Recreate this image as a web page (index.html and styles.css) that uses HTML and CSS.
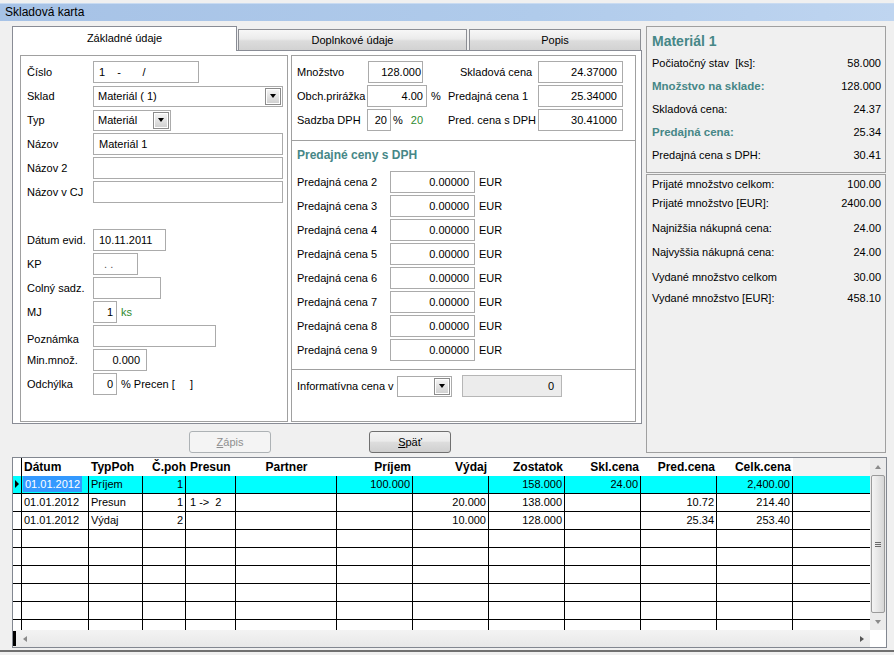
FILE: index.html
```html
<!DOCTYPE html>
<html lang="sk">
<head>
<meta charset="utf-8">
<title>Skladová karta</title>
<link rel="stylesheet" href="styles.css">
</head>
<body>
<div class="titlebar">Skladová karta</div>
<div class="main">
  <div class="leftcol">
    <div class="tabs">
      <div class="tab active">Základné údaje</div>
      <div class="tab t2">Doplnkové údaje</div>
      <div class="tab t3">Popis</div>
    </div>
    <div class="tabpage">
      <div class="box leftbox">
        <div class="frow"><div class="flabel">Číslo</div><div class="field w106">1    -       /</div></div>
        <div class="frow"><div class="flabel">Sklad</div><div class="select w190"><span>Materiál ( 1)</span><span class="ddbtn"></span></div></div>
        <div class="frow"><div class="flabel">Typ</div><div class="select w78"><span>Materiál</span><span class="ddbtn"></span></div></div>
        <div class="frow"><div class="flabel">Názov</div><div class="field w190">Materiál 1</div></div>
        <div class="frow"><div class="flabel">Názov 2</div><div class="field w190"></div></div>
        <div class="frow"><div class="flabel">Názov v CJ</div><div class="field w190"></div></div>
        <div class="frow"></div>
        <div class="frow"><div class="flabel">Dátum evid.</div><div class="field w73">10.11.2011</div></div>
        <div class="frow"><div class="flabel">KP</div><div class="field w45 kp"> . .</div></div>
        <div class="frow"><div class="flabel">Colný sadz.</div><div class="field w68"></div></div>
        <div class="frow"><div class="flabel">MJ</div><div class="field w24 r">1</div><span class="green sfx">ks</span></div>
        <div class="frow low"><div class="flabel">Poznámka</div><div class="field w123"></div></div>
        <div class="frow"><div class="flabel">Min.množ.</div><div class="field w54 r">0.000</div></div>
        <div class="frow"><div class="flabel">Odchýlka</div><div class="field w24 r">0</div><span class="sfx">% Precen [&nbsp;&nbsp;&nbsp;&nbsp;&nbsp;]</span></div>
      </div>
      <div class="box midbox">
        <div class="mtop">
          <div class="mrow">
            <div class="mleft"><div class="mlabel">Množstvo</div><div class="field w55 r tight shift">128.000</div></div>
            <div class="mrlabel indent">Skladová cena</div>
            <div class="field w85 r">24.37000</div>
          </div>
          <div class="mrow">
            <div class="mleft"><div class="mlabel">Obch.prirážka</div><div class="field w60 r pr3">4.00</div><span class="sfx">%</span></div>
            <div class="mrlabel">Predajná cena 1</div>
            <div class="field w85 r">25.34000</div>
          </div>
          <div class="mrow">
            <div class="mleft"><div class="mlabel">Sadzba DPH</div><div class="field w24 r">20</div><span class="pct">%</span><span class="green dph">20</span></div>
            <div class="mrlabel">Pred. cena s DPH</div>
            <div class="field w85 r">30.41000</div>
          </div>
        </div>
        <div class="mmid">
          <div class="mtitle">Predajné ceny s DPH</div>
          <div class="prow"><div class="plabel">Predajná cena 2</div><div class="field w85 r">0.00000</div><span class="eur">EUR</span></div>
          <div class="prow"><div class="plabel">Predajná cena 3</div><div class="field w85 r">0.00000</div><span class="eur">EUR</span></div>
          <div class="prow"><div class="plabel">Predajná cena 4</div><div class="field w85 r">0.00000</div><span class="eur">EUR</span></div>
          <div class="prow"><div class="plabel">Predajná cena 5</div><div class="field w85 r">0.00000</div><span class="eur">EUR</span></div>
          <div class="prow"><div class="plabel">Predajná cena 6</div><div class="field w85 r">0.00000</div><span class="eur">EUR</span></div>
          <div class="prow"><div class="plabel">Predajná cena 7</div><div class="field w85 r">0.00000</div><span class="eur">EUR</span></div>
          <div class="prow"><div class="plabel">Predajná cena 8</div><div class="field w85 r">0.00000</div><span class="eur">EUR</span></div>
          <div class="prow"><div class="plabel">Predajná cena 9</div><div class="field w85 r">0.00000</div><span class="eur">EUR</span></div>
        </div>
        <div class="mbot">
          <div class="prow"><div class="ilabel">Informatívna cena v</div><div class="select w55"><span></span><span class="ddbtn"></span></div><div class="field w100 r grey">0</div></div>
        </div>
      </div>
    </div>
    <div class="buttons">
      <div class="btn disabled"><u>Z</u>ápis</div>
      <div class="btn"><u>S</u>päť</div>
    </div>
  </div>
  <div class="rightpanel">
    <div class="rbox rtop">
      <div class="rtitle">Materiál 1</div>
      <div class="rrow"><span>Počiatočný stav  [ks]:</span><span>58.000</span></div>
      <div class="rrow"><span class="teal">Množstvo na sklade:</span><span>128.000</span></div>
      <div class="rrow"><span>Skladová cena:</span><span>24.37</span></div>
      <div class="rrow"><span class="teal">Predajná cena:</span><span>25.34</span></div>
      <div class="rrow"><span>Predajná cena s DPH:</span><span>30.41</span></div>
    </div>
    <div class="rbox rbottom">
      <div class="brow"><span>Prijaté množstvo celkom:</span><span>100.00</span></div>
      <div class="brow g1"><span>Prijaté množstvo [EUR]:</span><span>2400.00</span></div>
      <div class="brow g7"><span>Najnižšia nákupná cena:</span><span>24.00</span></div>
      <div class="brow g6"><span>Najvyššia nákupná cena:</span><span>24.00</span></div>
      <div class="brow g7"><span>Vydané množstvo celkom</span><span>30.00</span></div>
      <div class="brow g3"><span>Vydané množstvo [EUR]:</span><span>458.10</span></div>
    </div>
  </div>
</div>
<div class="grid">
  <div class="gtop">
    <div class="gtable">
      <div class="grow ghead">
        <div class="c ci"></div>
        <div class="c c1">Dátum</div>
        <div class="c c2">TypPoh</div>
        <div class="c c3 r">Č.poh</div>
        <div class="c c4">Presun</div>
        <div class="c c5 ctr">Partner</div>
        <div class="c cn r">Príjem</div>
        <div class="c cn r">Výdaj</div>
        <div class="c cn r">Zostatok</div>
        <div class="c cn r">Skl.cena</div>
        <div class="c cn r">Pred.cena</div>
        <div class="c cn r">Celk.cena</div>
        <div class="c cf"></div>
      </div>
      <div class="grow sel">
        <div class="c ci"><span class="ptr"></span></div>
        <div class="c c1 first"><span class="hl">01.01.2012</span></div>
        <div class="c c2">Príjem</div>
        <div class="c c3 r">1</div>
        <div class="c c4"></div>
        <div class="c c5"></div>
        <div class="c cn r">100.000</div>
        <div class="c cn r"></div>
        <div class="c cn r">158.000</div>
        <div class="c cn r">24.00</div>
        <div class="c cn r"></div>
        <div class="c cn r">2,400.00</div>
        <div class="c cf"></div>
      </div>
      <div class="grow">
        <div class="c ci"></div>
        <div class="c c1">01.01.2012</div>
        <div class="c c2">Presun</div>
        <div class="c c3 r">1</div>
        <div class="c c4">1 -&gt;  2</div>
        <div class="c c5"></div>
        <div class="c cn r"></div>
        <div class="c cn r">20.000</div>
        <div class="c cn r">138.000</div>
        <div class="c cn r"></div>
        <div class="c cn r">10.72</div>
        <div class="c cn r">214.40</div>
        <div class="c cf"></div>
      </div>
      <div class="grow">
        <div class="c ci"></div>
        <div class="c c1">01.01.2012</div>
        <div class="c c2">Výdaj</div>
        <div class="c c3 r">2</div>
        <div class="c c4"></div>
        <div class="c c5"></div>
        <div class="c cn r"></div>
        <div class="c cn r">10.000</div>
        <div class="c cn r">128.000</div>
        <div class="c cn r"></div>
        <div class="c cn r">25.34</div>
        <div class="c cn r">253.40</div>
        <div class="c cf"></div>
      </div>
      <div class="grow"><div class="c ci"></div><div class="c c1"></div><div class="c c2"></div><div class="c c3"></div><div class="c c4"></div><div class="c c5"></div><div class="c cn"></div><div class="c cn"></div><div class="c cn"></div><div class="c cn"></div><div class="c cn"></div><div class="c cn"></div><div class="c cf"></div></div>
      <div class="grow"><div class="c ci"></div><div class="c c1"></div><div class="c c2"></div><div class="c c3"></div><div class="c c4"></div><div class="c c5"></div><div class="c cn"></div><div class="c cn"></div><div class="c cn"></div><div class="c cn"></div><div class="c cn"></div><div class="c cn"></div><div class="c cf"></div></div>
      <div class="grow"><div class="c ci"></div><div class="c c1"></div><div class="c c2"></div><div class="c c3"></div><div class="c c4"></div><div class="c c5"></div><div class="c cn"></div><div class="c cn"></div><div class="c cn"></div><div class="c cn"></div><div class="c cn"></div><div class="c cn"></div><div class="c cf"></div></div>
      <div class="grow"><div class="c ci"></div><div class="c c1"></div><div class="c c2"></div><div class="c c3"></div><div class="c c4"></div><div class="c c5"></div><div class="c cn"></div><div class="c cn"></div><div class="c cn"></div><div class="c cn"></div><div class="c cn"></div><div class="c cn"></div><div class="c cf"></div></div>
      <div class="grow"><div class="c ci"></div><div class="c c1"></div><div class="c c2"></div><div class="c c3"></div><div class="c c4"></div><div class="c c5"></div><div class="c cn"></div><div class="c cn"></div><div class="c cn"></div><div class="c cn"></div><div class="c cn"></div><div class="c cn"></div><div class="c cf"></div></div>
      <div class="grow"><div class="c ci"></div><div class="c c1"></div><div class="c c2"></div><div class="c c3"></div><div class="c c4"></div><div class="c c5"></div><div class="c cn"></div><div class="c cn"></div><div class="c cn"></div><div class="c cn"></div><div class="c cn"></div><div class="c cn"></div><div class="c cf"></div></div>
    </div>
    <div class="vscroll">
      <div class="arr up"></div>
      <div class="thumb"><span class="grip"></span></div>
      <div class="arr down"></div>
    </div>
  </div>
  <div class="gbot">
    <div class="hscroll">
      <span class="hmark"></span>
      <span class="harr left"></span>
      <span class="hspace"></span>
      <span class="harr right"></span>
    </div>
    <div class="corner"></div>
  </div>
</div>
<div class="footline"></div>
</body>
</html>
```
FILE: styles.css
```css
* { box-sizing: border-box; }

body {
  margin: 0;
  width: 894px;
  height: 655px;
  overflow: hidden;
  background: #f0f0f0;
  font-family: "Liberation Sans", Arial, sans-serif;
  font-size: 11px;
  color: #000;
}

.titlebar {
  margin-top: 3px;
  height: 18px;
  line-height: 17px;
  padding-left: 5px;
  font-size: 12px;
  border-top: 1px solid #c9dbf1;
  background: linear-gradient(to right, #a6c2e6, #b0cbeb 60%, #bfd5f0);
}

.main {
  display: flex;
  gap: 4px;
  padding: 5px 0 0 12px;
}

.leftcol {
  width: 630px;
  display: flex;
  flex-direction: column;
}

.tabs {
  display: flex;
  align-items: flex-end;
  height: 25px;
  margin-bottom: -1px;
}

.tab {
  height: 21px;
  margin-bottom: 1px;
  border: 1px solid #8c8e94;
  border-bottom: none;
  background: linear-gradient(#f7f7f7, #ebebeb 45%, #dcdcdc 55%, #d2d2d2);
  text-align: center;
  line-height: 20px;
}

.tab.active {
  width: 225px;
  height: 25px;
  margin-bottom: 0;
  background: #fff;
  line-height: 22px;
  border-color: #898c95;
  position: relative;
  z-index: 1;
}

.tab.t2 { width: 229px; margin-left: 1px; }
.tab.t3 { width: 172px; margin-left: 2px; }

.tabpage {
  height: 374px;
  border: 1px solid #898c95;
  background: #fff;
  display: flex;
  gap: 3px;
  padding: 4px 5px 0 7px;
}

.box {
  border: 1px solid #a0a0a0;
  height: 367px;
}

.leftbox {
  width: 268px;
  padding: 5px 0 0 6px;
}

.midbox {
  width: 345px;
  display: flex;
  flex-direction: column;
}

.frow {
  display: flex;
  align-items: center;
  height: 22px;
  margin-bottom: 2px;
}

.frow.low .flabel { padding-top: 6px; }

.flabel { width: 66px; flex: none; }

.field {
  flex: none;
  height: 22px;
  border: 1px solid #ababab;
  background: #fff;
  padding: 0 5px;
  line-height: 20px;
  white-space: pre;
  overflow: hidden;
}

.field.r { text-align: right; }
.field.tight { padding-right: 1px; }
.field.pr3 { padding-right: 3px; }
.field.shift { margin-left: 1px; }
.field.kp { color: #555; padding-left: 7px; }
.field.grey { background: #ececec; border-color: #b6b6b6; margin-left: 10px; padding-right: 7px; }

.w24 { width: 24px; padding-right: 3px; }
.w45 { width: 45px; }
.w54 { width: 54px; padding-right: 6px; }
.w55 { width: 55px; }
.w60 { width: 60px; }
.w68 { width: 68px; }
.w73 { width: 73px; }
.w78 { width: 78px; }
.w85 { width: 85px; }
.w100 { width: 100px; }
.w106 { width: 106px; }
.w123 { width: 123px; }
.w190 { width: 190px; }

.select {
  flex: none;
  height: 21px;
  border: 1px solid #ababab;
  background: #fff;
  display: flex;
  align-items: center;
  justify-content: space-between;
  padding: 0 1px 0 4px;
}

.ddbtn {
  width: 16px;
  height: 17px;
  border: 1px solid #8b8b8b;
  background: linear-gradient(#f6f6f6, #e2e2e2 50%, #cfcfcf);
  box-shadow: inset 0 0 0 1px #fff;
  display: flex;
  align-items: center;
  justify-content: center;
}

.ddbtn::after {
  content: "";
  border-left: 3.5px solid transparent;
  border-right: 3.5px solid transparent;
  border-top: 4px solid #000;
}

.sfx { margin-left: 4px; }
.green { color: #2f8a2f; }
.pct { margin-left: 2px; }
.dph { margin-left: 8px; }

/* middle box */
.mtop {
  height: 85px;
  border-bottom: 1px solid #a0a0a0;
  padding: 5px 0 0 5px;
}

.mrow {
  display: grid;
  grid-template-columns: 151px 90px 85px;
  height: 22px;
  margin-bottom: 2px;
  align-items: center;
}

.mleft { display: flex; align-items: center; }
.mlabel { width: 70px; flex: none; }
.mrlabel.indent { padding-left: 12px; }

.mmid {
  height: 229px;
  border-bottom: 1px solid #a0a0a0;
  padding: 4px 0 0 5px;
}

.mtitle {
  color: #468787;
  font-weight: bold;
  font-size: 12px;
  line-height: 20px;
  margin-bottom: 6px;
}

.prow {
  display: flex;
  align-items: center;
  height: 22px;
  margin-bottom: 2px;
}

.plabel { width: 93px; flex: none; }
.eur { margin-left: 4px; }

.mbot { padding: 5px 0 0 5px; }
.ilabel { width: 100px; flex: none; }

/* buttons */
.buttons {
  display: flex;
  gap: 98px;
  padding-left: 177px;
  margin-top: 7px;
}

.btn {
  width: 82px;
  height: 22px;
  border: 1px solid #707070;
  border-radius: 3px;
  background: linear-gradient(#f3f3f3, #ebebeb 45%, #dddddd 52%, #cfcfcf);
  text-align: center;
  line-height: 20px;
}

.btn.disabled {
  border-color: #adb2b5;
  background: #f4f4f4;
  color: #8f8f8f;
}

/* right panel */
.rightpanel {
  width: 240px;
  display: flex;
  flex-direction: column;
  gap: 1px;
}

.rbox {
  border: 1px solid #a0a0a0;
  padding: 0 4px 0 5px;
  font-size: 11px;
}

.rtop { height: 147px; padding-top: 3px; }
.rbottom { height: 279px; }

.rtitle {
  font-size: 14px;
  font-weight: bold;
  color: #468787;
  line-height: 22px;
}

.rrow {
  display: flex;
  justify-content: space-between;
  height: 23px;
  line-height: 23px;
  white-space: pre;
}

.teal { color: #468787; font-weight: bold; font-size: 11.5px; }

.brow {
  display: flex;
  justify-content: space-between;
  height: 18px;
  line-height: 18px;
}

.g1 { margin-top: 1px; }
.g3 { margin-top: 3px; }
.g6 { margin-top: 6px; }
.g7 { margin-top: 7px; }

/* grid */
.grid {
  margin: 4px 0 0 12px;
  width: 875px;
  height: 191px;
  border: 1px solid #828790;
  background: #fff;
  display: flex;
  flex-direction: column;
}

.gtop { display: flex; height: 172px; }
.gtable { width: 857px; overflow: hidden; }

.grow {
  display: flex;
  height: 18px;
  border-bottom: 1px solid #000;
}

.grow.sel { background: #00ffff; }

.c {
  flex: none;
  height: 17px;
  border-right: 1px solid #000;
  padding: 0 2px;
  line-height: 17px;
  white-space: pre;
  overflow: hidden;
}

.c.r { text-align: right; }
.c.ctr { text-align: center; }
.ci { width: 9px; padding: 0; }
.c1 { width: 67px; }
.c1.first { padding-left: 1px; }
.c2 { width: 54px; }
.c3 { width: 43px; }
.c4 { width: 50px; padding-left: 4px; }
.c5 { width: 101px; }
.cn { width: 76px; }
.cf { flex: 1; border-right: none; }

.ghead {
  border-bottom: none;
  font-weight: bold;
  font-size: 12px;
}

.ghead .c { border-right: none; height: 18px; line-height: 18px; }
.ghead .ci { border-right: 1px solid #000; }
.ghead .cf { background: #f3f3f3; }
.ghead .c3 { padding-right: 0; }

.hl {
  display: inline-block;
  background: #3399ff;
  color: #fff;
  padding: 0 2px;
  line-height: 16px;
}

.ptr {
  display: block;
  width: 0;
  margin: 4px 0 0 2px;
  border-left: 4px solid #000;
  border-top: 4px solid transparent;
  border-bottom: 4px solid transparent;
}

.vscroll {
  width: 16px;
  display: flex;
  flex-direction: column;
  background: #ebebeb;
}

.arr {
  height: 17px;
  flex: none;
  display: flex;
  align-items: center;
  justify-content: center;
}

.arr.up::after {
  content: "";
  border-left: 3.5px solid transparent;
  border-right: 3.5px solid transparent;
  border-bottom: 4px solid #8a8a8a;
}

.arr.down::after {
  content: "";
  border-left: 3.5px solid transparent;
  border-right: 3.5px solid transparent;
  border-top: 4px solid #8a8a8a;
}

.thumb {
  flex: 1;
  margin: 0 1px;
  border: 1px solid #9a9a9a;
  border-radius: 2px;
  background: linear-gradient(to right, #f4f4f4, #e6e6e6 50%, #d6d6d6);
  display: flex;
  align-items: center;
  justify-content: center;
}

.grip {
  width: 6px;
  height: 1px;
  margin-top: -4px;
  background: #6a6a6a;
  box-shadow: 0 2px 0 #6a6a6a, 0 4px 0 #6a6a6a;
}

.gbot { display: flex; height: 17px; }

.hscroll {
  width: 857px;
  display: flex;
  align-items: center;
  background: linear-gradient(#f3f3f3, #e8e8e8);
}

.hmark {
  width: 3px;
  height: 15px;
  background: #000;
}

.harr.left {
  margin-left: 7px;
  border-right: 4px solid #8a8a8a;
  border-top: 3.5px solid transparent;
  border-bottom: 3.5px solid transparent;
}

.hspace { flex: 1; }

.harr.right {
  margin-right: 6px;
  border-left: 4px solid #555;
  border-top: 3.5px solid transparent;
  border-bottom: 3.5px solid transparent;
}

.corner { width: 16px; background: #fff; }

.footline {
  margin-top: 2px;
  height: 2px;
  background: #707070;
}
```
